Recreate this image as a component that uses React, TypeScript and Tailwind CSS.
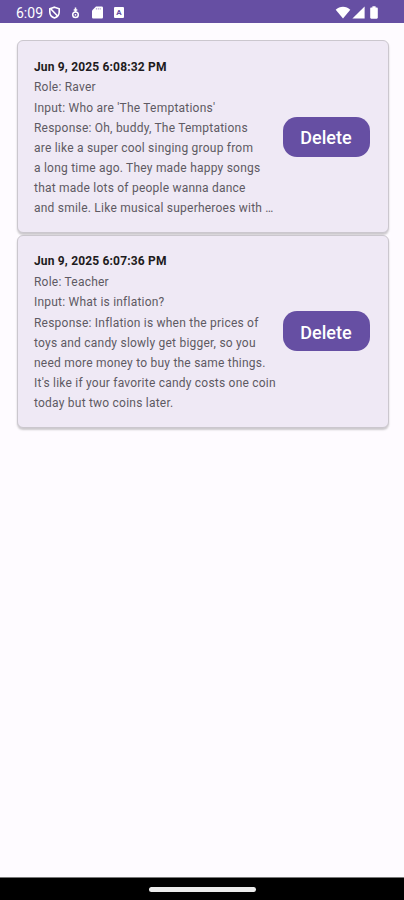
import React, { useState } from 'react';

type HistoryItem = {
   id: number;
   date: string;
   role: string;
   input: string;
   response: string[];
}

const historyItems: HistoryItem[] = [
   {
      id: 1,
      date: 'Jun 9, 2025 6:08:32 PM',
      role: 'Raver',
      input: "Who are 'The Temptations'",
      response: [
         'Oh, buddy, The Temptations',
         'are like a super cool singing group from',
         'a long time ago. They made happy songs',
         'that made lots of people wanna dance',
         'and smile. Like musical superheroes with …',
      ],
   },
   {
      id: 2,
      date: 'Jun 9, 2025 6:07:36 PM',
      role: 'Teacher',
      input: 'What is inflation?',
      response: [
         'Inflation is when the prices of',
         'toys and candy slowly get bigger, so you',
         'need more money to buy the same things.',
         "It's like if your favorite candy costs one coin",
         'today but two coins later.',
      ],
   },
];

const StatusBar = () => {
   return (
      <div className="flex h-[23px] shrink-0 items-center bg-[#664fa3] pl-[16px] pr-[26px] pt-[2px] text-white">
         <div className="w-[27px] whitespace-nowrap text-[14px] leading-none">6:09</div>
         <svg className="ml-[5px] h-[13px] w-[13px]" viewBox="0 0 13 13" fill="none" stroke="currentColor" strokeWidth={1.6}>
            <path d="M6.5 1.2 11.2 2.8v3.1c0 2.8-1.9 5-4.7 6-2.8-1-4.7-3.2-4.7-6V2.8z" />
            <path d="m2.2 2.2 7.6 8" />
         </svg>
         <svg className="ml-[10px] h-[12px] w-[9px]" viewBox="0 0 9 12" fill="none" stroke="currentColor" strokeWidth={1.5}>
            <path d="M4.5.4v4.5M2.7 3h3.6" />
            <circle cx="4.5" cy="7.8" r="2.8" />
            <circle cx="4.5" cy="7.8" r=".9" fill="currentColor" stroke="none" />
         </svg>
         <svg className="ml-[12px] h-[13px] w-[11px]" viewBox="0 0 11 13" fill="currentColor">
            <path d="M4 .5h5.7c.7 0 1.3.6 1.3 1.3v9.4c0 .7-.6 1.3-1.3 1.3H1.3C.6 12.5 0 11.9 0 11.2V4.5z" />
            <path d="M4.4 2v1.6M6.3 2v1.6M8.2 2v1.6" stroke="#664fa3" strokeWidth={0.5} />
         </svg>
         <div className="ml-[11px] flex h-[11px] w-[10px] items-center justify-center rounded-[1px] bg-white text-[8px] font-bold leading-none text-[#664fa3]">A</div>
         <svg className="ml-auto h-[13px] w-[16px]" viewBox="0 0 16 13" fill="currentColor">
            <path d="M.7 3.7C4.6-.2 11.4-.2 15.3 3.7L8 12.6z" />
         </svg>
         <svg className="ml-px h-[13px] w-[13px]" viewBox="0 0 13 13" fill="currentColor">
            <path d="M12.6.4v12.2H.4z" />
         </svg>
         <svg className="ml-[5px] h-[13px] w-[8px]" viewBox="0 0 8 13" fill="currentColor">
            <path d="M2.4.2h3.2v1.3h1.1c.7 0 1.1.4 1.1 1.1v9c0 .7-.4 1.1-1.1 1.1H1.3c-.7 0-1.1-.4-1.1-1.1v-9c0-.7.4-1.1 1.1-1.1h1.1z" />
         </svg>
      </div>
   )
}

const HistoryCard = ({item, onDelete}: {item: HistoryItem, onDelete: (id:number) => void}) => {
   return (
      <div className="flex h-[193px] items-center justify-between rounded-[6px] border border-[#cbc7ce] bg-[#efe9f5] pl-[16px] pr-[18px] shadow-[0_2px_2px_rgba(0,0,0,0.2)]">
         <div className="whitespace-nowrap pt-[2px] text-[12px] tracking-[0.22px] text-[#5e5a63]">
            <div className="h-[20.5px] font-bold leading-[20px] tracking-[0.17px] text-[#1d1b20]">{item.date}</div>
            <div className="h-[20.5px] leading-[20px]">Role: {item.role}</div>
            <div className="h-[20.5px] leading-[20px]">Input: {item.input}</div>
            {item.response.map((line, index) => (
               <div key={index} className="leading-[20px]">{index === 0 ? 'Response: ' + line : line}</div>
            ))}
         </div>
         <button onClick={() => onDelete(item.id)} className="h-[40px] w-[87px] shrink-0 cursor-pointer rounded-[14px] bg-[#664fa3] pt-[2px] text-[18px] font-medium text-white">Delete</button>
      </div>
   )
}

const App = () => {
   const [items, setItems] = useState(historyItems);

   const deleteHandle = (id:number) => {
      setItems(items.filter((item) => item.id !== id));
   }

   return (
      <div className="flex h-[900px] w-[404px] flex-col overflow-hidden bg-[#fefbff] font-['Roboto',sans-serif]">
         <StatusBar />
         <div className="flex flex-1 flex-col gap-[1.5px] pl-[17px] pr-[15.5px] pt-[17px]">
            {items.map((item) => (
               <HistoryCard key={item.id} item={item} onDelete={deleteHandle} />
            ))}
         </div>
         <div className="flex h-[23px] shrink-0 items-center justify-center border-t border-[#777] bg-black">
            <div className="h-[5px] w-[107px] rounded-full bg-[#ececec]"></div>
         </div>
      </div>
   )
}

export default App;
